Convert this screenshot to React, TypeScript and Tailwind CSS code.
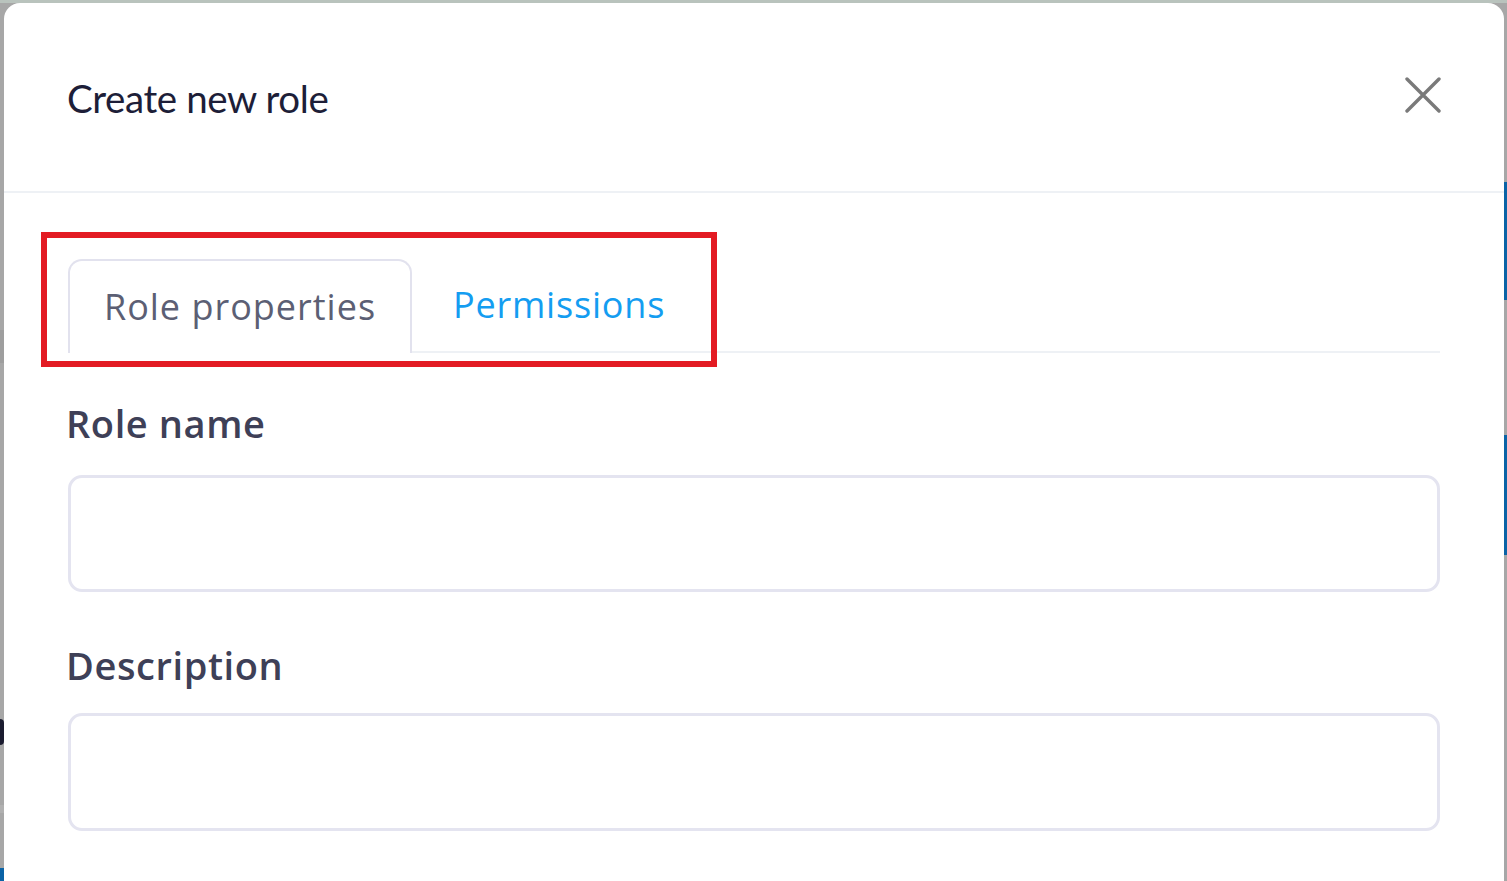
export default function App() {
  return (
    <div className="w-full h-[881px] overflow-hidden bg-[#a7a7a7] flex flex-col">
      {/* top sliver of the page behind the overlay */}
      <div className="h-[3px] bg-[#b9c3bd] shrink-0"></div>

      <div className="flex flex-1 min-h-0">
        {/* left sliver */}
        <div className="w-[4px] shrink-0 flex flex-col">
          <div className="h-[327px] bg-[#a7a7a7]"></div>
          <div className="h-[33px] bg-[#9e9e9e]"></div>
          <div className="h-[356px] bg-[#a7a7a7]"></div>
          <div className="h-[26px] bg-[#1b1c30] rounded-r-full"></div>
          <div className="h-[60px] bg-[#a7a7a7]"></div>
          <div className="h-[8px] bg-[#b0b0b0]"></div>
          <div className="h-[55px] bg-[#a7a7a7]"></div>
          <div className="flex-1 bg-[#0a63a6]"></div>
        </div>

        {/* Modal */}
        <div className="flex-1 bg-white rounded-t-[16px] relative">
          {/* Header */}
          <div className="h-[190px] flex items-center justify-between pl-[63px] pr-[63px] border-b-2 border-[#eef1f5]">
            <h1 className="text-[38.5px] tracking-[-0.4px] text-[#1d1e38] font-['Lato',sans-serif] pt-[4px]">
              Create new role
            </h1>
            <svg width="36" height="36" viewBox="0 0 36 36" className="text-[#7a7a7a] mb-[4px]">
              <path d="M2 2L34 34M34 2L2 34" stroke="currentColor" strokeWidth="3.4" strokeLinecap="round" />
            </svg>
          </div>

          {/* Body */}
          <div className="px-[64px] pt-[66px] font-['Open_Sans',sans-serif]">
            {/* Tabs */}
            <div className="relative">
              <div className="flex border-b-2 border-[#eef1f5]">
                <div className="h-[94px] w-[344px] -mb-[2px] flex items-center justify-center bg-white border-2 border-b-0 border-[#e2e2ee] rounded-t-[14px] text-[36px] text-[#5c5f74] tracking-[1px]">
                  Role properties
                </div>
                <div className="h-[92px] pl-[41px] flex items-center text-[36px] text-[#149df1] tracking-[0.8px]">
                  Permissions
                </div>
              </div>
              {/* red annotation box */}
              <div className="absolute left-[-27px] top-[-27px] w-[676px] h-[135px] border-[6px] border-[#e31b23]"></div>
            </div>

            {/* Role name */}
            <div className="mt-[46px] -ml-[2px] text-[38px] font-semibold text-[#3e4057] leading-[48px] tracking-[0.6px]">Role name</div>
            <div className="mt-[28px] h-[117px] border-[3px] border-[#e4e4f0] rounded-[14px]"></div>

            {/* Description */}
            <div className="mt-[49px] -ml-[2px] text-[38px] font-semibold text-[#3e4057] leading-[48px] tracking-[0.6px]">Description</div>
            <div className="mt-[24px] h-[118px] border-[3px] border-[#e4e4f0] rounded-[14px]"></div>
          </div>
        </div>

        {/* right sliver */}
        <div className="w-[3px] shrink-0 flex flex-col">
          <div className="h-[179px] bg-[#a7a7a7]"></div>
          <div className="h-[118px] bg-[#0a63a6]"></div>
          <div className="h-[135px] bg-[#a7a7a7]"></div>
          <div className="h-[120px] bg-[#0a63a6]"></div>
          <div className="flex-1 bg-[#a7a7a7]"></div>
        </div>
      </div>
    </div>
  )
}
